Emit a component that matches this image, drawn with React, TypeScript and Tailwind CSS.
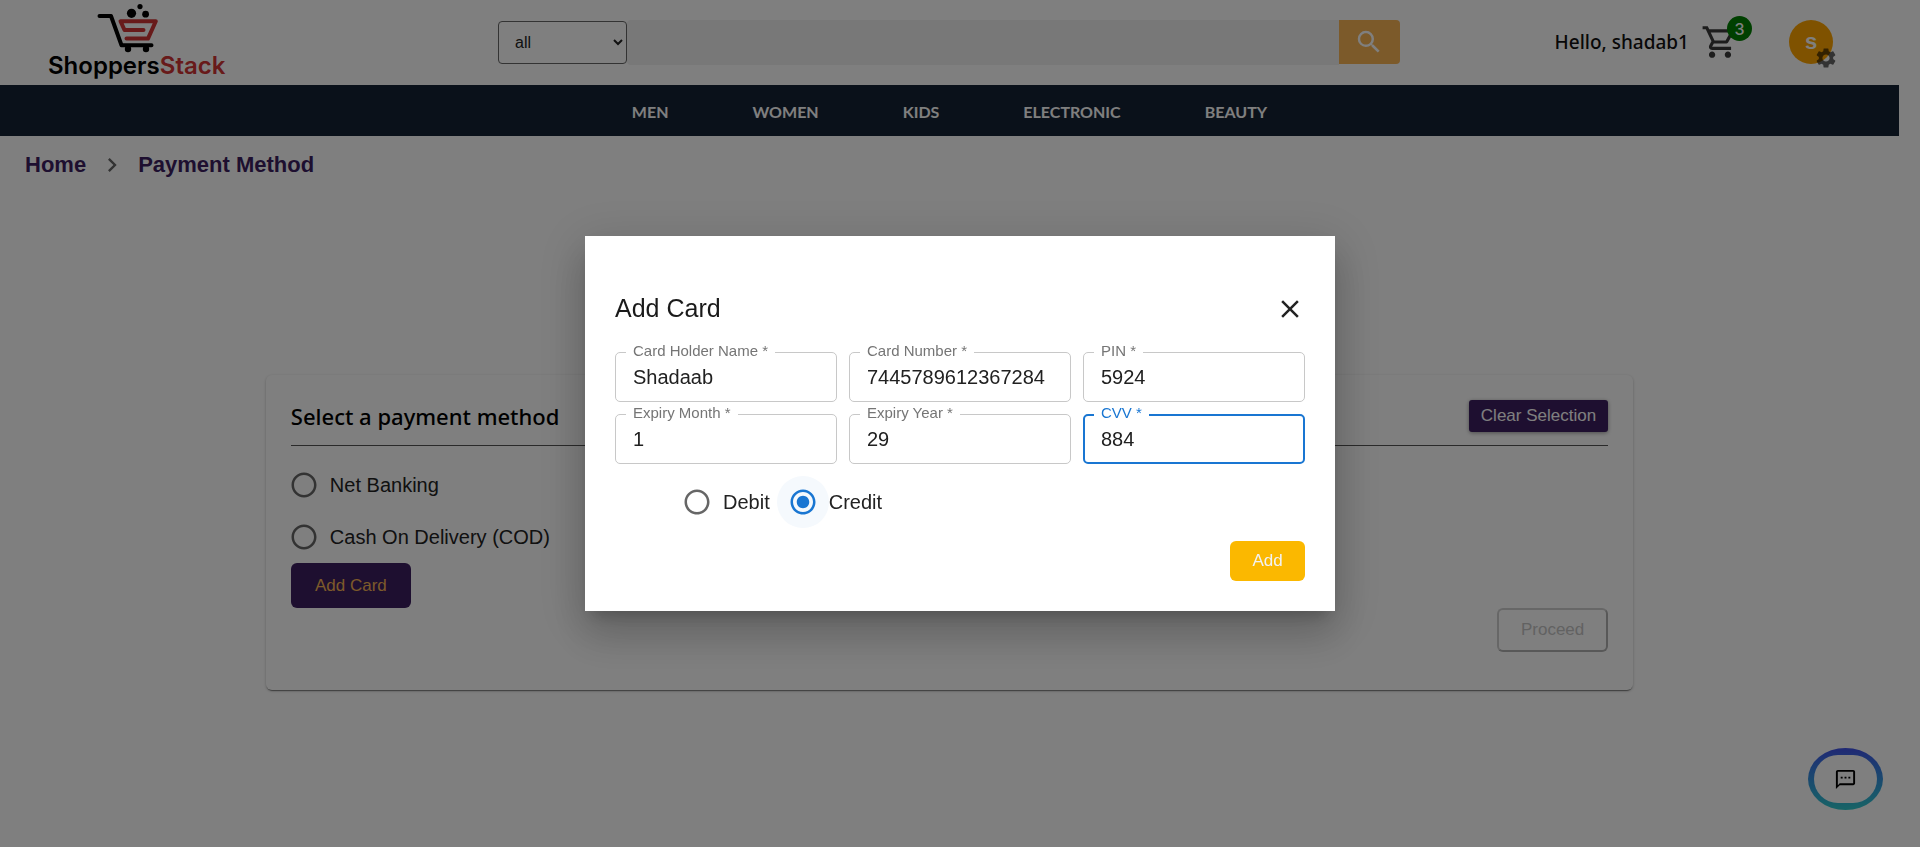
import { useState } from "react";
import {
  MdClose,
  MdNavigateNext,
  MdOutlineShoppingCart,
  MdOutlineTextsms,
  MdRadioButtonChecked,
  MdRadioButtonUnchecked,
  MdSearch,
  MdSettings,
} from "react-icons/md";

const categories = ["MEN", "WOMEN", "KIDS", "ELECTRONIC", "BEAUTY"];

const cardFields = [
  { id: "holder", label: "Card Holder Name", value: "Shadaab" },
  { id: "number", label: "Card Number", value: "7445789612367284" },
  { id: "pin", label: "PIN", value: "5924" },
  { id: "month", label: "Expiry Month", value: "1" },
  { id: "year", label: "Expiry Year", value: "29" },
  { id: "cvv", label: "CVV", value: "884", active: true },
];

function Logo() {
  return (
    <a href="#home" className="flex flex-col" aria-label="ShoppersStack">
      <svg viewBox="96 2 64 52" className="ml-12 h-[52px] w-16" fill="none" strokeLinecap="round" strokeLinejoin="round">
        <circle cx="131.500" cy="13.300" r="4.600" fill="#000" />
        <circle cx="140" cy="6.600" r="2.600" fill="#000" />
        <circle cx="145.600" cy="14.200" r="3.400" fill="#000" />
        <path d="M99.500 16H111L121.500 45.200H151.500" stroke="#000" strokeWidth="4" />
        <circle cx="128" cy="49" r="3.200" fill="#000" />
        <circle cx="146" cy="49" r="3.200" fill="#000" />
        <path d="M143.500 30H124.500L120.500 21.200H155.800L148 38.600H126.500" stroke="#d03535" strokeWidth="4" />
      </svg>
      <span className="font-['Inter',sans-serif] text-2xl leading-6 font-semibold text-black">
        Shoppers<span className="text-[#d03535]">Stack</span>
      </span>
    </a>
  );
}

function Header() {
  return (
    <header className="flex h-[85px] items-start pr-[66px] pl-12">
      <div className="w-[177px] shrink-0 pt-[2px]">
        <Logo />
      </div>
      <form className="mt-5 ml-[273px] flex flex-1 items-start" onSubmit={(e) => e.preventDefault()}>
        <select
          aria-label="Category"
          className="mt-px h-[43px] w-[129px] shrink-0 rounded border border-[#666] bg-white pl-3 text-base text-[#222]"
        >
          <option>all</option>
        </select>
        <input aria-label="Search" className="h-[45px] min-w-0 flex-1 rounded-l bg-[#f0f0f0] px-3 outline-none" />
        <button aria-label="Search products" className="flex h-11 w-[61px] items-center justify-center rounded-r bg-[#f8b454] text-white">
          <MdSearch className="size-[30px]" />
        </button>
      </form>
      <div className="ml-[155px] flex shrink-0 items-center pt-5">
        <span className="font-['Noto_Sans',sans-serif] text-[19px] font-medium text-[#111]">Hello, shadab1</span>
        <button aria-label="Cart" className="relative ml-3 text-[#3b3b3b]">
          <MdOutlineShoppingCart className="size-[38px]" />
          <span className="absolute -top-[7px] left-[26px] flex size-[25px] items-center justify-center rounded-full bg-[#008000] font-['Inter',sans-serif] text-base font-medium text-white">
            3
          </span>
        </button>
        <button aria-label="Account" className="relative ml-[50px] flex size-11 items-center justify-center rounded-full bg-[#ffa500] text-[22px] leading-6 font-bold text-white">
          s
          <MdSettings className="absolute top-[26px] left-[25px] size-6 text-black/60" />
        </button>
      </div>
    </header>
  );
}

interface RadioProps {
  id: string;
  name: string;
  label: string;
  checked: boolean;
  onSelect: () => void;
}

function Radio({ id, name, label, checked, onSelect }: RadioProps) {
  const Icon = checked ? MdRadioButtonChecked : MdRadioButtonUnchecked;
  return (
    <label htmlFor={id} className="flex items-center text-xl text-[#222]">
      <span
        className={`relative flex size-[52px] items-center justify-center rounded-full ${checked ? "bg-[#f5f9fd] text-[#1976d2]" : "text-[#666]"}`}
      >
        <input
          id={id}
          type="radio"
          name={name}
          checked={checked}
          onChange={onSelect}
          className="absolute inset-0 m-0 size-full cursor-pointer opacity-0"
        />
        <Icon className="size-[30px]" />
      </span>
      {label}
    </label>
  );
}

function PaymentCard() {
  const [method, setMethod] = useState("");
  return (
    <section className="mx-auto mt-[196px] w-[72%] rounded-md bg-white px-[25px] pt-[25px] pb-[38px] shadow-[0_2px_1px_-1px_rgba(0,0,0,0.4),0_1px_3px_rgba(0,0,0,0.25)]">
      <div className="flex h-[46px] items-start justify-between border-b border-[#555]">
        <h1 className="font-['Noto_Sans',sans-serif] text-[22px] leading-8 font-medium text-black">
          Select a payment method
        </h1>
        <button
          onClick={() => setMethod("")}
          className="h-8 rounded-[3px] bg-[#3c1e60] px-3 text-[17px] text-white shadow-[0_1px_4px_rgba(0,0,0,0.4)]"
        >
          Clear Selection
        </button>
      </div>
      <div className="pt-[13px]">
        <div className="-ml-[13px]">
          <Radio id="net" name="payment" label="Net Banking" checked={method === "net"} onSelect={() => setMethod("net")} />
          <Radio
            id="cod"
            name="payment"
            label="Cash On Delivery (COD)"
            checked={method === "cod"}
            onSelect={() => setMethod("cod")}
          />
        </div>
        <button className="h-[45px] w-[120px] rounded-md bg-[#3c1e60] text-[17px] text-[#f8b454]">Add Card</button>
      </div>
      <div className="flex justify-end">
        <button
          disabled
          className="h-11 w-[111px] rounded-md border-2 border-t-[#cfcfcf] border-r-[#b0b0b0] border-b-[#b0b0b0] border-l-[#cfcfcf] text-[17px] text-[#c4c4c4]"
        >
          Proceed
        </button>
      </div>
    </section>
  );
}

function CardField({ id, label, value, active }: { id: string; label: string; value: string; active?: boolean }) {
  return (
    <div className="relative">
      <label
        htmlFor={id}
        className={`absolute -top-[9px] left-[11px] bg-white px-[7px] text-[15px] leading-4 ${active ? "text-[#1976d2]" : "text-[#757575]"}`}
      >
        {label} *
      </label>
      <input
        id={id}
        defaultValue={value}
        className={`h-[50px] w-full rounded-[5px] text-xl text-[#212121] outline-none ${active ? "border-2 border-[#1976d2] px-4" : "border border-[#c8c8c8] px-[17px]"}`}
      />
    </div>
  );
}

function AddCardDialog() {
  const [type, setType] = useState("credit");
  return (
    <div className="fixed inset-0 flex items-center justify-center bg-black/50">
      <div
        role="dialog"
        aria-labelledby="add-card-title"
        className="w-[750px] bg-white px-[30px] pt-[58px] pb-[30px] shadow-[0_11px_15px_-7px_rgba(0,0,0,0.2),0_24px_38px_3px_rgba(0,0,0,0.14),0_9px_46px_8px_rgba(0,0,0,0.12)]"
      >
        <div className="flex h-[30px] items-center justify-between">
          <h2 id="add-card-title" className="text-[25px] text-[#1a1a1a]">
            Add Card
          </h2>
          <button aria-label="Close" className="text-[#222]">
            <MdClose className="size-[30px]" />
          </button>
        </div>
        <div className="mt-7 grid grid-cols-3 gap-3">
          {cardFields.map((field) => (
            <CardField key={field.id} {...field} />
          ))}
        </div>
        <div className="mt-3 flex gap-[7px] pl-14">
          <Radio id="debit" name="card-type" label="Debit" checked={type === "debit"} onSelect={() => setType("debit")} />
          <Radio id="credit" name="card-type" label="Credit" checked={type === "credit"} onSelect={() => setType("credit")} />
        </div>
        <div className="mt-[13px] flex justify-end">
          <button className="h-10 w-[75px] rounded-md bg-[#fbb800] text-[17px] text-[#f2f2f2]">Add</button>
        </div>
      </div>
    </div>
  );
}

export default function App() {
  return (
    <div className="min-h-screen bg-white pr-[21px] font-['Liberation_Sans',Arial,sans-serif]">
      <Header />
      <nav className="flex h-[51px] items-center justify-center gap-[84px] bg-[#142234] pt-[2px] font-['Lato',sans-serif] text-base font-bold text-white">
        {categories.map((name) => (
          <a key={name} href={`#${name.toLowerCase()}`}>
            {name}
          </a>
        ))}
      </nav>
      <div className="flex items-center gap-3 pt-[15px] pl-[25px] text-[22px] leading-7 font-bold text-[#3c1e60]">
        <a href="#home">Home</a>
        <MdNavigateNext className="size-7 text-[#666]" />
        <a href="#payment">Payment Method</a>
      </div>
      <PaymentCard />
      <button
        aria-label="Chat"
        className="fixed right-[37px] bottom-[37px] flex h-[62px] w-[75px] items-center justify-center rounded-[50%] bg-linear-to-b from-[#4050e8] to-[#30c8cc] px-[6px] py-[7px] text-black"
      >
        <span className="flex size-full items-center justify-center rounded-[25px] bg-white">
          <MdOutlineTextsms className="size-[23px]" />
        </span>
      </button>
      <AddCardDialog />
    </div>
  );
}
